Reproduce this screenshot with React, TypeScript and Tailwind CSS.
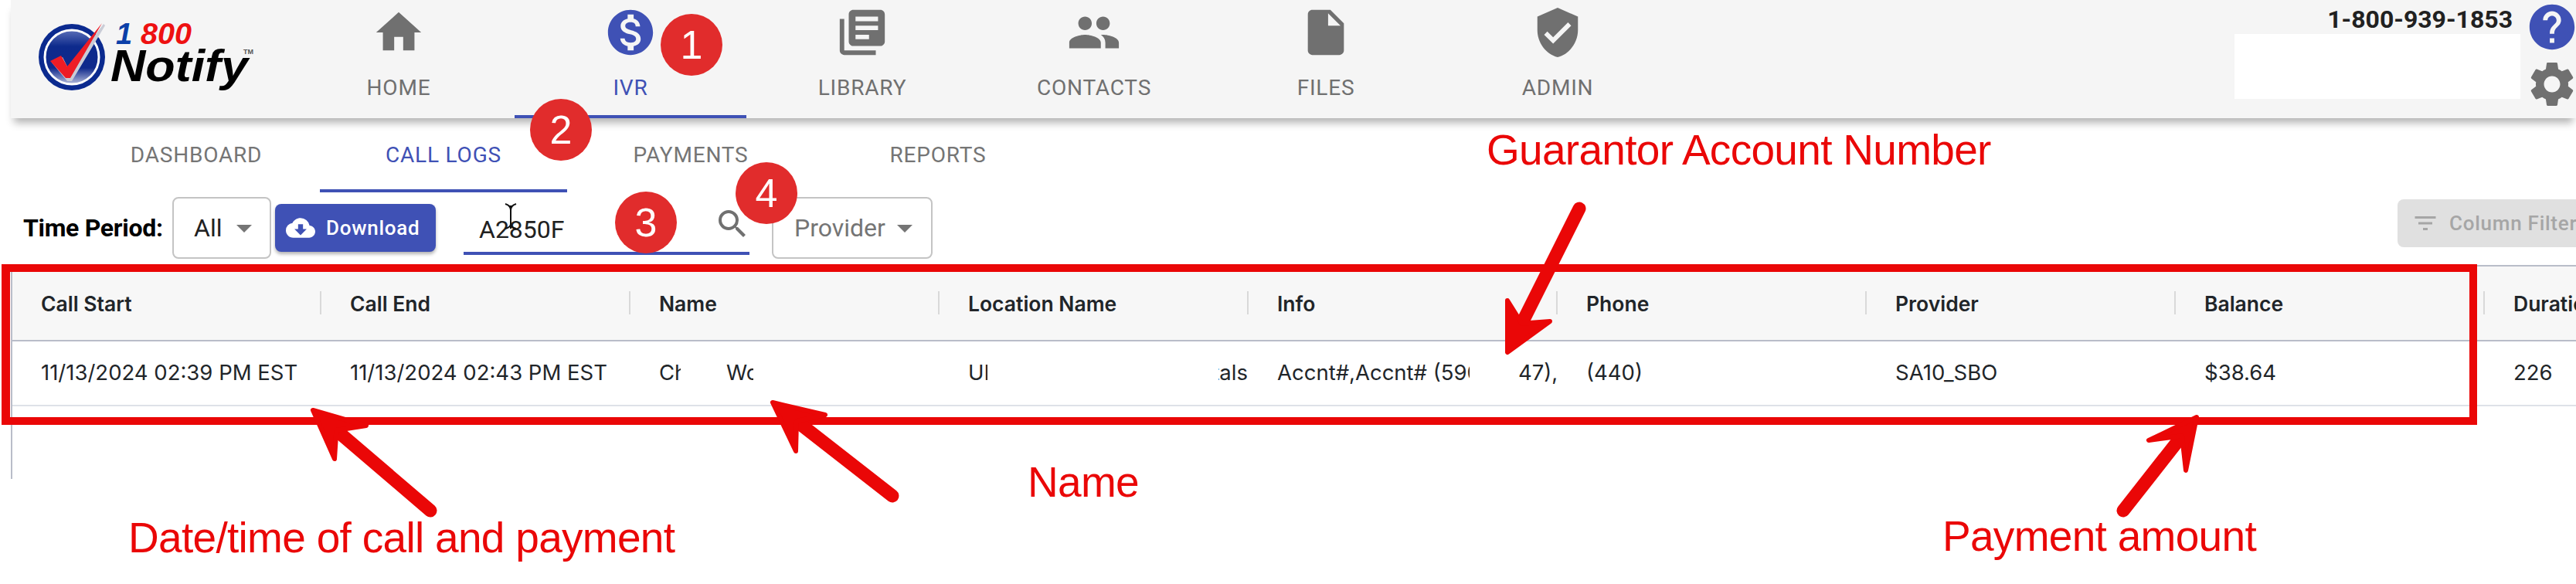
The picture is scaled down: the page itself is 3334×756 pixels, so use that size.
import type { ReactNode } from "react";
import {
  MdArrowDropDown,
  MdCloudDownload,
  MdFilterList,
  MdHelp,
  MdHome,
  MdInsertDriveFile,
  MdLibraryBooks,
  MdMonetizationOn,
  MdPeople,
  MdSearch,
  MdSettings,
  MdVerifiedUser,
} from "react-icons/md";

const NAV = [
  { label: "HOME", icon: MdHome },
  { label: "IVR", icon: MdMonetizationOn, active: true },
  { label: "LIBRARY", icon: MdLibraryBooks },
  { label: "CONTACTS", icon: MdPeople },
  { label: "FILES", icon: MdInsertDriveFile },
  { label: "ADMIN", icon: MdVerifiedUser },
];

const SUB_TABS = ["DASHBOARD", "CALL LOGS", "PAYMENTS", "REPORTS"];

const COLUMNS = [
  "Call Start",
  "Call End",
  "Name",
  "Location Name",
  "Info",
  "Phone",
  "Provider",
  "Balance",
  "Duration",
];

const Logo = () => (
  <svg width="300" height="110" viewBox="0 0 300 110" className="mt-[20px] ml-[30px] shrink-0">
    <defs>
      <linearGradient id="disc" x1="0" y1="0" x2="0" y2="1">
        <stop offset="0" stopColor="#5b6fb8" />
        <stop offset="0.3" stopColor="#0d2a8c" />
        <stop offset="0.7" stopColor="#10298c" />
        <stop offset="1" stopColor="#b4bcdc" />
      </linearGradient>
    </defs>
    <circle cx="49" cy="54" r="43" fill="#0b2a8f" />
    <circle cx="49" cy="54" r="35" fill="url(#disc)" stroke="#ffffff" strokeWidth="3" />
    <path d="M23 61 L37 54 L45 70 L90 11 L92 13 L49 85 L43 85 Z" fill="#c9ccd6" />
    <path d="M21 59 L35 52 L43 66 L88 10 L47 81 L41 81 Z" fill="#ee1c25" />
    <text x="106" y="37" fontFamily="'Liberation Sans', sans-serif" fontWeight="700" fontStyle="italic" fontSize="38" fill="#0b3fa8">1</text>
    <text x="138" y="37" fontFamily="'Liberation Sans', sans-serif" fontWeight="700" fontStyle="italic" fontSize="38" fill="#ee1111" textLength="66" lengthAdjust="spacingAndGlyphs">800</text>
    <text x="99" y="85" fontFamily="'Liberation Sans', sans-serif" fontWeight="700" fontStyle="italic" fontSize="58" fill="#000000" textLength="178" lengthAdjust="spacingAndGlyphs">Notify</text>
    <text x="271" y="50" fontFamily="'Liberation Sans', sans-serif" fontWeight="700" fontSize="9" fill="#555555">TM</text>
  </svg>
);

const Header = () => (
  <header className="relative z-10 ml-[14px] flex h-[153px] bg-[#f5f5f5] shadow-[0_10px_10px_-4px_rgba(0,0,0,0.3)]">
    <div className="w-[352px] shrink-0">
      <Logo />
    </div>
    <nav className="flex">
      {NAV.map(({ label, icon: Icon, active }) => (
        <div
          key={label}
          className={`flex h-[153px] w-[300px] flex-col items-center pt-[7px] ${
            active ? "border-b-4 border-[#3f51b5] text-[#3f51b5]" : "text-[#707070]"
          }`}
        >
          <Icon size={70} />
          <span className="mt-[22px] font-['Roboto',sans-serif] text-[28px] leading-[30px] tracking-[0.8px]">
            {label}
          </span>
        </div>
      ))}
    </nav>
    <div className="ml-[726px] flex w-[370px] shrink-0 flex-col">
      <span className="mt-[7px] h-[37px] pr-[10px] text-right font-['Roboto',sans-serif] text-[32px] leading-[37px] font-bold text-[#212121]">
        1-800-939-1853
      </span>
      <div className="h-[84px] bg-white" />
    </div>
    <div className="ml-[6px] flex w-[70px] shrink-0 flex-col">
      <MdHelp size={70} className="text-[#3f51b5]" />
      <MdSettings size={70} className="mt-[4px] text-[#707070]" />
    </div>
  </header>
);

const SubTabs = () => (
  <div className="ml-[94px] flex h-[96px]">
    {SUB_TABS.map((tab) => {
      const active = tab === "CALL LOGS";
      return (
        <div
          key={tab}
          className={`flex h-[96px] w-[320px] justify-center pt-[32px] font-['Roboto',sans-serif] text-[28px] leading-[32px] tracking-[0.8px] ${
            active ? "border-b-4 border-[#3f51b5] text-[#3f51b5]" : "text-[#757575]"
          }`}
        >
          {tab}
        </div>
      );
    })}
  </div>
);

const SelectBox = ({ children, className }: { children: ReactNode; className: string }) => (
  <div
    className={`flex h-[80px] shrink-0 items-center rounded-[8px] border-2 border-[#c4c4c4] bg-white font-['Roboto',sans-serif] text-[32px] ${className}`}
  >
    {children}
  </div>
);

const Toolbar = () => (
  <div className="flex h-[94px] items-start pt-[6px] pl-[30px]">
    <span className="mt-[21px] w-[193px] shrink-0 font-['Roboto',sans-serif] text-[32px] leading-[38px] font-bold tracking-[-0.3px] text-black">
      Time Period:
    </span>
    <SelectBox className="w-[128px] pl-[26px] text-[#212121]">
      All
      <MdArrowDropDown size={48} className="ml-[5px] text-[#757575]" />
    </SelectBox>
    <button className="mt-[9px] ml-[5px] flex h-[62px] w-[208px] shrink-0 items-center rounded-[8px] bg-[#3f51b5] pl-[14px] font-['Roboto',sans-serif] text-[26px] font-medium tracking-[0.74px] text-white shadow-[0_3px_4px_rgba(0,0,0,0.3)]">
      <MdCloudDownload size={38} />
      <span className="ml-[14px]">Download</span>
    </button>
    <div className="ml-[36px] flex h-[75px] w-[370px] shrink-0 items-end justify-between border-b-4 border-[#3f51b5] pl-[20px] pb-[10px] font-['Roboto',sans-serif] text-[32px] leading-[38px] text-[#212121]">
      A2850F
      <MdSearch size={48} className="mr-[-2px] mb-[2px] text-[#707070]" />
    </div>
    <SelectBox className="ml-[29px] w-[208px] pl-[27px] text-[#757575]">
      Provider
      <MdArrowDropDown size={48} className="ml-[1px] text-[#757575]" />
    </SelectBox>
    <div className="mt-[3px] ml-[1896px] flex h-[62px] w-[300px] shrink-0 items-center rounded-[8px] bg-[#e0e0e0] pl-[18px] font-['Roboto',sans-serif] text-[26px] font-medium tracking-[0.74px] text-[#a6a6a6]">
      <MdFilterList size={36} />
      <span className="ml-[13px]">Column Filters</span>
    </div>
  </div>
);

const Clip = ({ width, text, className = "" }: { width: string; text: string; className?: string }) => (
  <span className={`block overflow-hidden whitespace-nowrap ${width} ${className}`}>{text}</span>
);

const Table = () => (
  <div className="ml-[14px] h-[277px] w-[3320px] border-t-2 border-l-2 border-[#b9bdc9] font-['Inter',sans-serif] text-[#212529]">
    <div className="flex h-[97px] w-max items-center border-b-2 border-[#b9bdc9] bg-[#f7f7f7] pb-[2px] text-[26.5px] font-semibold">
      {COLUMNS.map((col) => (
        <div key={col} className="flex h-[30px] w-[400px] items-center border-r-2 border-[#d9d9d9] pl-[37px] leading-[34px]">
          <span className="mt-[2px]">{col}</span>
        </div>
      ))}
    </div>
    <div className="flex h-[84px] w-max items-center border-b-2 border-[#dee2e8] pb-[1px] text-[27.5px]">
      <div className="w-[400px] pl-[37px]">11/13/2024 02:39 PM EST</div>
      <div className="w-[400px] pl-[37px]">11/13/2024 02:43 PM EST</div>
      <div className="flex w-[400px] pl-[37px]">
        <Clip width="w-[28px]" text="Ch" />
        <Clip width="w-[35px]" text="Wo" className="ml-[59px]" />
      </div>
      <div className="flex w-[400px] pl-[37px]">
        <Clip width="w-[25px]" text="UH" />
        <span className="ml-[299px] block w-[38px] overflow-hidden text-right whitespace-nowrap [direction:rtl]">itals</span>
      </div>
      <div className="flex w-[400px] pl-[37px]">
        <Clip width="w-[249px]" text="Accnt#,Accnt# (590" />
        <Clip width="w-[50px]" text="47)," className="ml-[63px]" />
      </div>
      <div className="w-[400px] pl-[37px]">(440)</div>
      <div className="w-[400px] pl-[37px]">SA10_SBO</div>
      <div className="w-[400px] pl-[37px]">$38.64</div>
      <div className="w-[400px] pl-[37px]">226</div>
    </div>
  </div>
);

const Badge = ({ n, className }: { n: number; className: string }) => (
  <div
    className={`absolute z-20 flex h-[80px] w-[80px] items-center justify-center rounded-full bg-[#e12c2c] font-['Liberation_Sans',sans-serif] text-[52px] leading-none text-white ${className}`}
  >
    {n}
  </div>
);

const Note = ({ text, className }: { text: string; className: string }) => (
  <span
    className={`absolute z-20 font-['Liberation_Sans',sans-serif] text-[55px] leading-[62px] tracking-[-0.7px] whitespace-nowrap text-[#ea0707] ${className}`}
  >
    {text}
  </span>
);

type Pt = [number, number];

const Arrow = ({ tail, tip, a, b }: { tail: Pt; tip: Pt; a: Pt; b: Pt }) => {
  const mx = tip[0] + (tail[0] - tip[0]) * 0.2;
  const my = tip[1] + (tail[1] - tip[1]) * 0.2;
  return (
    <g fill="#ea0707" stroke="#ea0707" strokeLinecap="round" strokeLinejoin="round">
      <line x1={tail[0]} y1={tail[1]} x2={mx} y2={my} strokeWidth="17" />
      <polygon points={`${tip} ${a} ${mx},${my} ${b}`} strokeWidth="6" />
    </g>
  );
};

const Annotations = () => (
  <>
    <div className="absolute top-[342px] left-[2px] z-20 h-[208px] w-[3204px] border-[10px] border-l-[11px] border-[#ea0707]" />
    <svg width="3334" height="756" className="pointer-events-none absolute top-0 left-0 z-20">
      <Arrow tail={[557, 661]} tip={[405, 531]} a={[474, 551]} b={[433, 594]} />
      <Arrow tail={[1155, 642]} tip={[1000, 521]} a={[1068, 537]} b={[1030, 584]} />
      <Arrow tail={[2044, 270]} tip={[1951, 456]} a={[1951, 389]} b={[2006, 416]} />
      <Arrow tail={[2748, 661]} tip={[2843, 540]} a={[2781, 570]} b={[2829, 609]} />
      <path d="M661 266 V296 M654 264 Q661 266 661 272 Q661 266 668 264 M654 296 Q661 294 661 290 Q661 294 668 296" stroke="#111111" strokeWidth="2" fill="none" />
    </svg>
    <Badge n={1} className="top-[18px] left-[855px]" />
    <Badge n={2} className="top-[128px] left-[686px]" />
    <Badge n={3} className="top-[248px] left-[796px]" />
    <Badge n={4} className="top-[210px] left-[952px]" />
    <Note text="Guarantor Account Number" className="top-[163px] left-[1924px]" />
    <Note text="Name" className="top-[593px] left-[1330px]" />
    <Note text="Date/time of call and payment" className="top-[665px] left-[166px]" />
    <Note text="Payment amount" className="top-[663px] left-[2514px]" />
  </>
);

export default function App() {
  return (
    <div className="relative h-[756px] w-[3334px] overflow-hidden bg-white">
      <Header />
      <SubTabs />
      <Toolbar />
      <Table />
      <Annotations />
    </div>
  );
}
